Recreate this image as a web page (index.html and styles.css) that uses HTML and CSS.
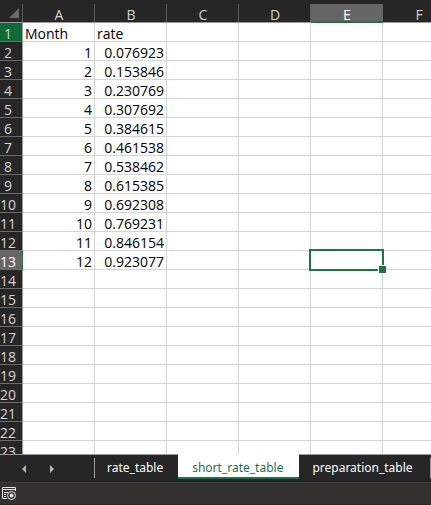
FILE: index.html
```html
<!DOCTYPE html>
<html lang="en">
<head>
	<meta charset="utf-8">
	<meta name="viewport" content="width=device-width, initial-scale=1">
	<title>short_rate_table</title>
	<link rel="stylesheet" href="styles.css">
</head>
<body>

    <main class="sheet">
        <table>
            <thead>
                <tr>
                    <th class="corner"><svg width="12" height="12" viewBox="0 0 12 12"><path d="M11 1V11H1Z" fill="#6b6b6b"/></svg></th>
                    <th>A</th>
                    <th>B</th>
                    <th>C</th>
                    <th>D</th>
                    <th class="active">E</th>
                    <th>F</th>
                </tr>
            </thead>
            <tbody id="sheetBody">
            </tbody>
        </table>
    </main>

    <nav class="tabs">
        <div class="arrows">
            <button type="button" aria-label="Previous sheet"><svg width="6" height="10" viewBox="0 0 6 10"><path d="M5 1V9L1 5Z" fill="#b4b4b4"/></svg></button>
            <button type="button" aria-label="Next sheet"><svg width="6" height="10" viewBox="0 0 6 10"><path d="M1 1V9L5 5Z" fill="#b4b4b4"/></svg></button>
        </div>
        <a href="#" class="tab">rate_table</a>
        <a href="#" class="tab current">short_rate_table</a>
        <a href="#" class="tab last">preparation_table</a>
    </nav>

    <footer class="status">
        <button type="button" aria-label="Record macro">
            <svg width="15" height="14" viewBox="0 0 15 14" fill="none" stroke="#e6e6e6">
                <path d="M5 11.5H0.5V0.5H13.5V4M0 2.5H14M2 5.5H6M2 7.5H4M2 9.5H4"/>
                <circle cx="9.500" cy="8.500" r="4"/>
                <circle cx="9.500" cy="8.500" r="2" fill="#e6e6e6" stroke="none"/>
            </svg>
        </button>
    </footer>

    <script>
        const rates = ['0.076923', '0.153846', '0.230769', '0.307692', '0.384615', '0.461538',
            '0.538462', '0.615385', '0.692308', '0.769231', '0.846154', '0.923077'];
        const sheetBody = document.getElementById('sheetBody');

        for (let row = 1; row <= 23; row++) {
            const tr = document.createElement('tr');
            let month = '';
            let rate = '';
            if (row === 1) {
                tr.className = 'titles';
                month = 'Month';
                rate = 'rate';
            } else if (row <= rates.length + 1) {
                month = row - 1;
                rate = rates[row - 2];
            }
            if (row === 13) {
                tr.className = 'active';
            }
            tr.innerHTML = `
                <th>${row}</th>
                <td>${month}</td>
                <td>${rate}</td>
                <td></td>
                <td></td>
                <td${row === 13 ? ' class="selected"' : ''}></td>
                <td></td>
            `;
            sheetBody.appendChild(tr);
        }
    </script>
</body>
</html>
```
FILE: styles.css
```css
* {
    box-sizing: border-box;
}

body {
    display: flex;
    flex-direction: column;
    height: 100vh;
    margin: 0;
    overflow: hidden;
    background-color: #262626;
    font-family: "Open Sans", "Noto Sans", sans-serif;
    font-size: 14px;
}

.sheet {
    flex: 1;
    min-height: 0;
    overflow: hidden;
    background-color: #fff;
}

table {
    width: 455px;
    table-layout: fixed;
    border-collapse: separate;
    border-spacing: 0;
    line-height: 14px;
}

th, td {
    height: 19px;
    padding: 4px 2px 0;
    border-right: 1px solid #d4d4d4;
    border-bottom: 1px solid #d4d4d4;
    font-weight: 380;
    white-space: nowrap;
}

td {
    color: #000;
    text-align: right;
}

.titles td {
    text-align: left;
}

th {
    background-color: #262626;
    color: #d4d4d4;
}

thead th {
    height: 23px;
    padding-top: 8px;
    border-color: #9b9b9b;
    border-right: 0;
    background-image: linear-gradient(#5a5a5a, #5a5a5a);
    background-size: 1px 18px;
    background-position: right bottom;
    background-repeat: no-repeat;
}

thead .corner {
    width: 23px;
    padding: 0 1px 0 0;
    text-align: right;
}

.corner svg {
    display: block;
    margin: 4px 2px 0 auto;
}

thead .active {
    border-bottom-color: #217346;
    background-image: linear-gradient(#666, #666);
    background-size: 100% 18px;
    box-shadow: inset 0 -1px #217346;
    color: #fff;
}

tbody th {
    padding: 4px 6px 0 0;
    border-right-color: #9b9b9b;
    border-bottom-color: #6b6b6b;
    text-align: center;
}

tbody .titles th {
    background-color: #0e6b37;
}

tbody .active th {
    border-right-color: #217346;
    background-color: #666;
    color: #fff;
}

.selected {
    position: relative;
}

.selected::before {
    content: "";
    position: absolute;
    inset: -2px;
    border: 2px solid #217346;
}

.selected::after {
    content: "";
    position: absolute;
    right: -4px;
    bottom: -4px;
    width: 7px;
    height: 7px;
    border: solid #fff;
    border-width: 1px 0 0 1px;
    background-color: #217346;
}

.tabs {
    display: flex;
    height: 28px;
    font-family: "Noto Sans", sans-serif;
    font-size: 12px;
    line-height: 25px;
}

.arrows {
    display: flex;
    flex: none;
    gap: 22px;
    width: 94px;
    height: 28px;
    padding-left: 21px;
    border-top: 1px solid #9b9b9b;
}

button {
    display: flex;
    align-items: center;
    padding: 0;
    border: 0;
    background: none;
}

.tab {
    flex: none;
    padding: 0 15px 0 13px;
    border-top: 1px solid #9b9b9b;
    color: #fff;
    text-decoration: none;
    background-image: linear-gradient(#9b9b9b, #9b9b9b);
    background-size: 1px 20px;
    background-position: 0 3px;
    background-repeat: no-repeat;
}

.tab.current {
    height: 25px;
    padding: 0 16px 0 14px;
    border-top-color: #fff;
    border-bottom: 2px solid #217346;
    background: #fff;
    color: #217346;
}

.tab.last {
    flex: 1;
    background-position: right 3px;
}

.status {
    display: flex;
    height: 23px;
    padding-left: 2px;
    border-top: 1px solid #3c3c3c;
    border-bottom: 1px solid #262626;
    background-color: #32312f;
}
```
